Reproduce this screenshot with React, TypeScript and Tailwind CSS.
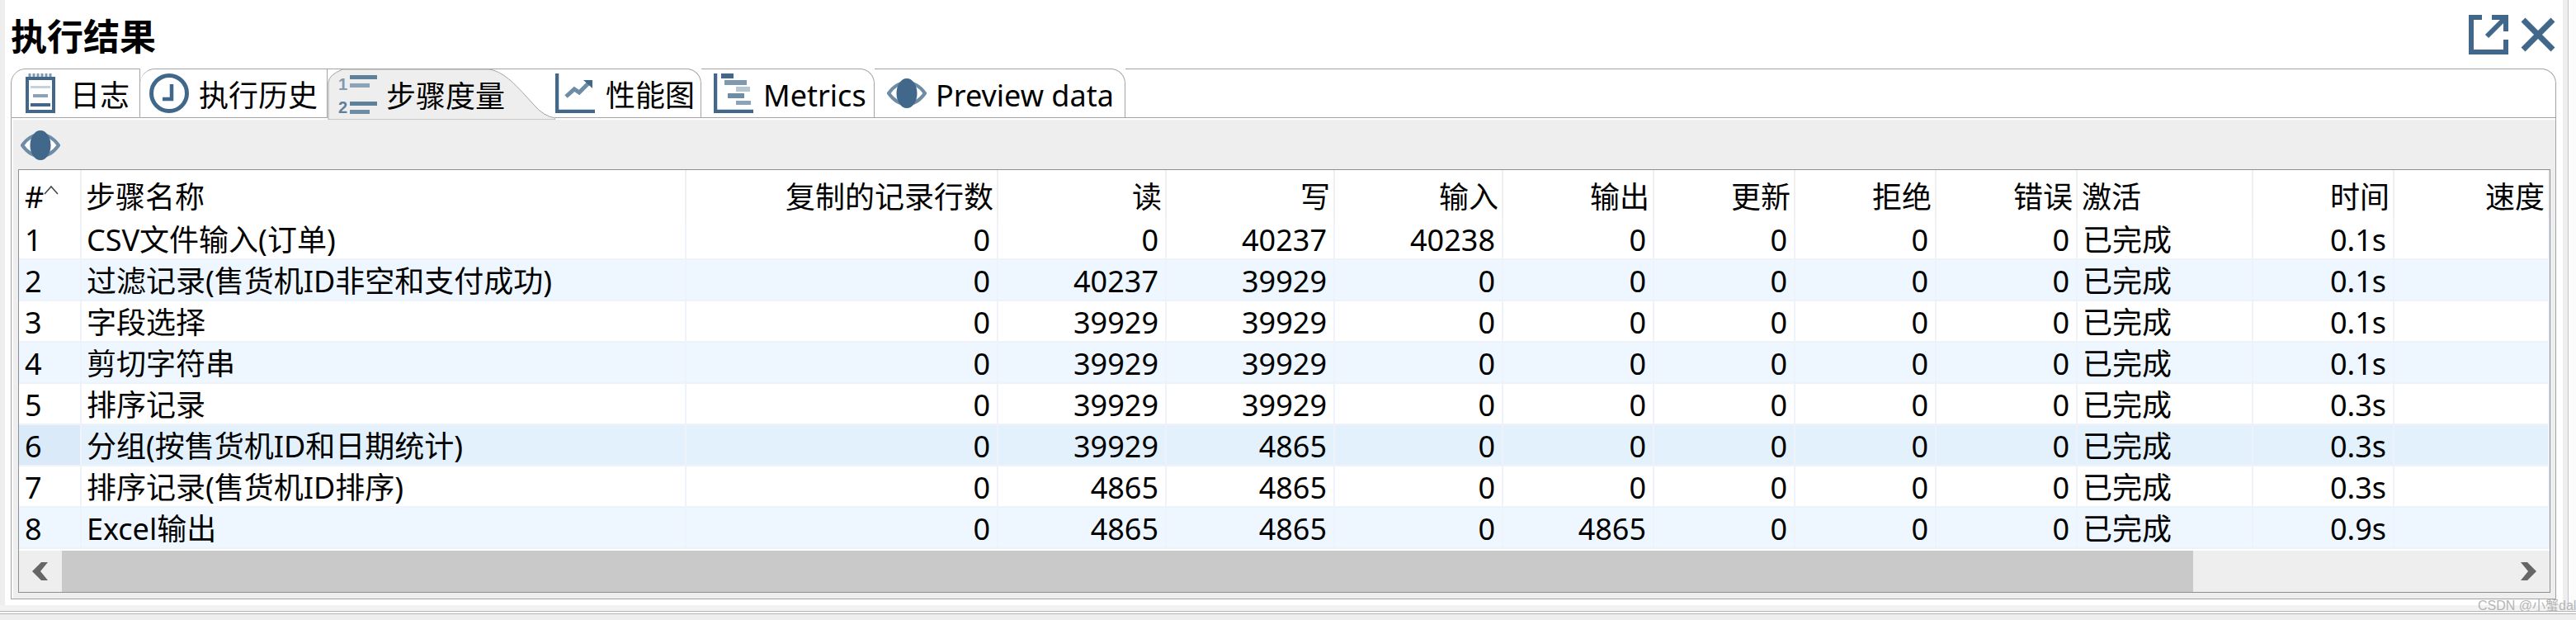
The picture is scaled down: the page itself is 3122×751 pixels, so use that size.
import type { ReactNode } from "react";

const BLUE = "#41688a";

const columns = [
  { title: "#", align: "left" },
  { title: "步骤名称", align: "left" },
  { title: "复制的记录行数", align: "right" },
  { title: "读", align: "right" },
  { title: "写", align: "right" },
  { title: "输入", align: "right" },
  { title: "输出", align: "right" },
  { title: "更新", align: "right" },
  { title: "拒绝", align: "right" },
  { title: "错误", align: "right" },
  { title: "激活", align: "left" },
  { title: "时间", align: "right" },
  { title: "速度", align: "right" },
];

const rows = [
  ["1", "CSV文件输入(订单)", "0", "0", "40237", "40238", "0", "0", "0", "0", "已完成", "0.1s", ""],
  ["2", "过滤记录(售货机ID非空和支付成功)", "0", "40237", "39929", "0", "0", "0", "0", "0", "已完成", "0.1s", ""],
  ["3", "字段选择", "0", "39929", "39929", "0", "0", "0", "0", "0", "已完成", "0.1s", ""],
  ["4", "剪切字符串", "0", "39929", "39929", "0", "0", "0", "0", "0", "已完成", "0.1s", ""],
  ["5", "排序记录", "0", "39929", "39929", "0", "0", "0", "0", "0", "已完成", "0.3s", ""],
  ["6", "分组(按售货机ID和日期统计)", "0", "39929", "4865", "0", "0", "0", "0", "0", "已完成", "0.3s", ""],
  ["7", "排序记录(售货机ID排序)", "0", "4865", "4865", "0", "0", "0", "0", "0", "已完成", "0.3s", ""],
  ["8", "Excel输出", "0", "4865", "4865", "0", "4865", "0", "0", "0", "已完成", "0.9s", ""],
];

const gridCols =
  "grid grid-cols-[76px_733px_378px_204px_204px_204px_183px_171px_171px_171px_213px_171px_188px]";

function EyeIcon() {
  return (
    <svg width="48" height="36" viewBox="0 0 48 36" className="shrink-0">
      <path d="M2 18C9 8 16 5 24 5s15 3 22 13c-7 10-14 13-22 13S9 28 2 18Z" fill="#fff" stroke="#6f8ca6" strokeWidth="4" />
      <ellipse cx="24" cy="18" rx="12.5" ry="18" fill={BLUE} />
    </svg>
  );
}

function ClipboardIcon() {
  return (
    <svg width="36" height="48" viewBox="0 0 36 48" className="shrink-0">
      <path d="M5 0v8M10 0v8M15 0v8M20 0v8M25 0v8M30 0v8" stroke="#7f99b0" strokeWidth="3" />
      <rect x="2" y="6" width="32" height="40" fill="#fff" stroke={BLUE} strokeWidth="4" />
      <rect x="6" y="15" width="24" height="3" fill="#c5d2dd" />
      <rect x="9" y="25" width="18" height="4" fill="#8aa3b8" />
      <rect x="6" y="36" width="24" height="4" fill={BLUE} />
    </svg>
  );
}

function ClockIcon() {
  return (
    <svg width="48" height="48" viewBox="0 0 48 48" className="shrink-0">
      <circle cx="24" cy="24" r="21.5" fill="#fff" stroke={BLUE} strokeWidth="5" />
      <path d="M27 13v18H16" fill="none" stroke={BLUE} strokeWidth="4.5" />
    </svg>
  );
}

function ListIcon() {
  return (
    <svg width="48" height="48" viewBox="0 0 48 48" className="shrink-0 overflow-visible">
      <text x="0" y="19" fontSize="20" fontWeight="700" fill="#7f99b0" fontFamily="Liberation Sans, sans-serif">1</text>
      <text x="0" y="47" fontSize="20" fontWeight="700" fill="#5f8099" fontFamily="Liberation Sans, sans-serif">2</text>
      <rect x="14" y="1" width="33" height="5" fill="#5f8099" />
      <rect x="14" y="11" width="24" height="5" fill="#8aa3b8" />
      <rect x="14" y="33" width="33" height="5" fill="#5f8099" />
      <rect x="14" y="43" width="24" height="5" fill="#6f8ca6" />
    </svg>
  );
}

function ChartIcon() {
  return (
    <svg width="48" height="48" viewBox="0 0 48 48" className="shrink-0">
      <path d="M2 0v46h46" fill="none" stroke={BLUE} strokeWidth="4.5" />
      <path d="M13 28l10-9 6 4 13-13" fill="none" stroke="#6f8ca6" strokeWidth="5" />
      <path d="M34 8h11v10z" fill={BLUE} />
    </svg>
  );
}

function GanttIcon() {
  return (
    <svg width="48" height="48" viewBox="0 0 48 48" className="shrink-0">
      <path d="M2 0v46h46" fill="none" stroke={BLUE} strokeWidth="4.5" />
      <rect x="9" y="0" width="15" height="6" fill={BLUE} />
      <rect x="13" y="8" width="27" height="6" fill="#7f99b0" />
      <rect x="27" y="16" width="17" height="6" fill="#b7c6d3" />
      <rect x="17" y="24" width="20" height="6" fill="#6f8ca6" />
      <rect x="27" y="33" width="18" height="5" fill="#8aa3b8" />
    </svg>
  );
}

function Tab({ className, icon, label }: { className: string; icon: ReactNode; label: string }) {
  return (
    <div className={`flex h-[60px] shrink-0 items-center border-t border-b border-[#a3a3a3] bg-white ${className}`}>
      {icon}
      <span className="pt-1.5">{label}</span>
    </div>
  );
}

function Table() {
  return (
    <div className="flex h-[513px] flex-col overflow-hidden border border-[#8b9096] bg-white">
      <div className={`${gridCols} h-[59px]`}>
        {columns.map((col, i) => (
          <div
            key={i}
            className={`flex items-center border-r-2 border-[#efefef] pt-[6px] ${
              col.align === "right" ? "justify-end pr-1" : i === 0 ? "pl-[7px]" : "pl-[5px]"
            }`}
          >
            {col.title}
            {i === 0 && (
              <svg width="18" height="12" viewBox="0 0 18 12" className="mb-[18px]">
                <path d="M1 11L9 2l8 9" fill="none" stroke="#444444" strokeWidth="1.5" />
              </svg>
            )}
          </div>
        ))}
      </div>
      {rows.map((row, r) => {
        const shaded = r % 2 === 1;
        const bg = r === 5 ? "bg-[#e3f1fd]" : shaded ? "bg-[#eef7ff]" : "bg-white";
        return (
          <div key={r} className={`${gridCols} h-[50px] ${bg}`}>
            {row.map((cell, c) => (
              <div
                key={c}
                className={`flex items-center overflow-hidden whitespace-nowrap border-r-2 border-b-2 border-[#eef3f9] pt-[3px] ${
                  c === 0 ? "pl-[7px]" : ""
                } ${c === 0 && r === 5 ? "bg-[#dbeaf8]" : ""} ${
                  columns[c].align === "right" ? "justify-end pr-2" : c === 0 ? "" : "pl-[6px]"
                }`}
              >
                {cell}
              </div>
            ))}
          </div>
        );
      })}
      <div className="flex h-[52px] border-t-2 border-white bg-[#eeeeee]">
        <div className="flex w-[52px] items-center justify-center">
          <svg width="20" height="22" viewBox="0 0 20 22">
            <path d="M19 0h-8L0 11l11 11h8L10 11z" fill="#666666" />
          </svg>
        </div>
        <div className="h-[50px] w-[2583px] bg-[#c9c9c9]" />
        <div className="flex flex-1 items-center justify-end pr-[16px]">
          <svg width="20" height="22" viewBox="0 0 20 22">
            <path d="M1 0h8l11 11L9 22H1l9-11z" fill="#666666" />
          </svg>
        </div>
      </div>
    </div>
  );
}

export default function App() {
  return (
    <div className="relative flex h-[751px] w-[3122px] flex-col overflow-hidden bg-white font-['Noto_Sans','Noto_Sans_CJK_SC',sans-serif] text-[36px] leading-none text-black">
      <div className="flex h-[733px]">
        <div className="w-[6px] shrink-0 bg-[#eeeeee]" />
        <div className="flex min-w-0 flex-1 flex-col">
          <div className="flex h-[83px] items-center justify-between pr-[9px] pl-[7px]">
            <h1 className="pt-1 text-[44px] font-bold">执行结果</h1>
            <div className="flex items-center gap-[15px]">
              <svg width="48" height="48" viewBox="0 0 48 48">
                <path d="M16 3H3v42h42V30" fill="none" stroke={BLUE} strokeWidth="6" />
                <path d="M28 0h20v20h-6V6H28z" fill={BLUE} />
                <path d="M42 6L22 26" fill="none" stroke={BLUE} strokeWidth="6" />
              </svg>
              <svg width="42" height="42" viewBox="0 0 42 42">
                <path d="M3 3l36 36M39 3L3 39" fill="none" stroke={BLUE} strokeWidth="7" />
              </svg>
            </div>
          </div>

          <div className="ml-[7px] mr-[8px] flex h-[60px]">
            <Tab className="w-[157px] gap-[18px] rounded-tl-[18px] border-l border-r pl-[17px]" icon={<ClipboardIcon />} label="日志" />
            <Tab className="w-[227px] gap-[12px] rounded-tl-[18px] border-r pl-[11px]" icon={<ClockIcon />} label="执行历史" />
            <div className="relative flex h-[60px] w-[276px] shrink-0 items-center gap-[10px] border-t border-[#a3a3a3] pl-[13px]">
              <svg className="absolute -top-px left-0" width="276" height="62" viewBox="0 0 276 62">
                <path d="M1 62V17Q1 8 18 1H196C215 4 230 22 250 44Q262 58 276 60V62Z" fill="#eeeeee" stroke="#a3a3a3" />
              </svg>
              <div className="relative"><ListIcon /></div>
              <span className="relative pt-1.5">步骤度量</span>
            </div>
            <Tab className="w-[177px] gap-[13px] rounded-tr-[18px] border-r" icon={<ChartIcon />} label="性能图" />
            <Tab className="w-[210px] gap-[12px] rounded-tr-[18px] border-r pl-[15px]" icon={<GanttIcon />} label="Metrics" />
            <Tab className="w-[304px] gap-[11px] rounded-tr-[18px] border-r pl-[15px]" icon={<EyeIcon />} label="Preview data" />
            <div className="flex-1 rounded-tr-[18px] border-t border-r border-b border-[#a3a3a3]" />
          </div>

          <div className="ml-[7px] mr-[8px] flex h-[583px] flex-col border-x border-b border-[#a3a3a3] bg-[#eeeeee] pl-[8px] pr-[6px] shadow-[inset_2px_2px_0_#ffffff]">
            <div className="flex h-[62px] items-center pl-[3px] pt-[3px]">
              <EyeIcon />
            </div>
            <Table />
          </div>
        </div>
        <div className="flex w-[16px] shrink-0">
          <div className="w-[6px] bg-[#eeeeee]" />
          <div className="flex-1 border-l border-[#c8c8c8] bg-[#fbfbfb]" />
        </div>
      </div>
      <div className="h-[7px] bg-[#f2f2f2]" />
      <div className="h-[4px] border-y border-[#b4b4b4] bg-white" />
      <div className="flex-1 bg-[#eeeeee]" />
      <span className="absolute left-[3003px] top-[726px] whitespace-nowrap font-['Liberation_Sans','Noto_Sans_CJK_SC',sans-serif] text-[16px] text-[#b5b5b5]">
        CSDN @小蟹dal
      </span>
    </div>
  );
}
